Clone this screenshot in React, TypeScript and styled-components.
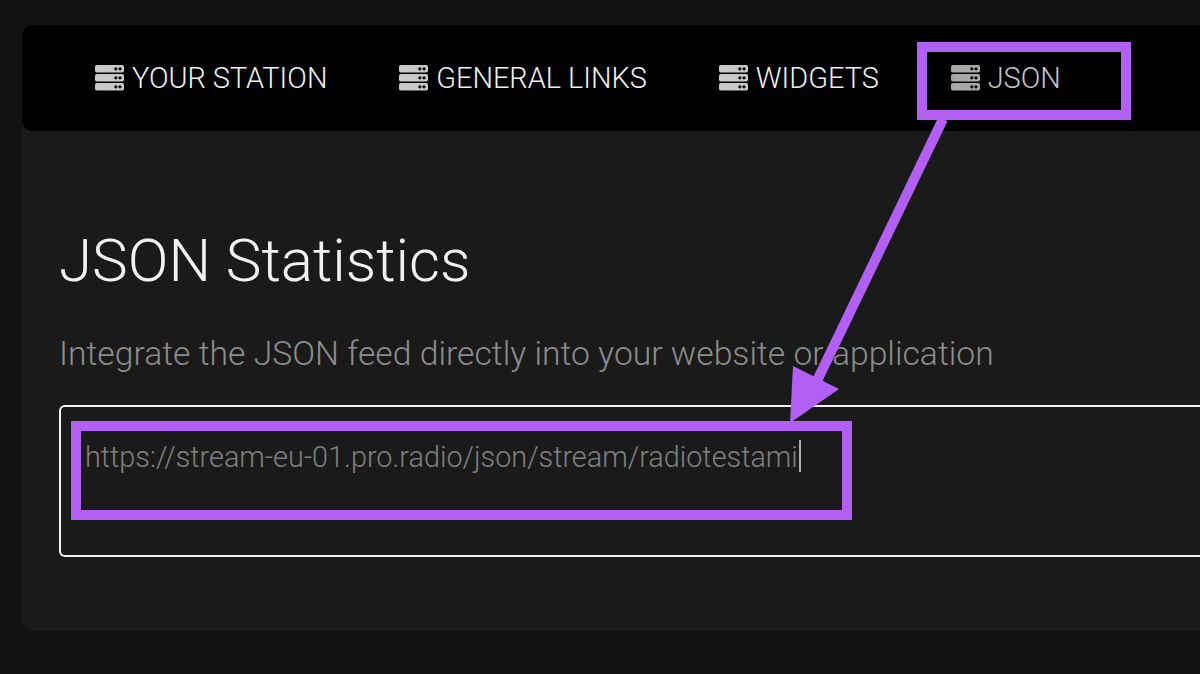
import styled, { createGlobalStyle } from "styled-components";

const navItems = [
  { label: "YOUR STATION" },
  { label: "GENERAL LINKS" },
  { label: "WIDGETS" },
  { label: "JSON", active: true },
];

function ServerIcon() {
  return (
    <svg width="29" height="26" viewBox="0 0 29 26" fill="currentColor">
      {[0, 9, 18].map((y) => (
        <g key={y}>
          <rect x="0" y={y} width="29" height="7.6" rx="1.8" />
          <circle cx="20.8" cy={y + 3.8} r="1.6" fill="#000" />
          <circle cx="25" cy={y + 3.8} r="1.6" fill="#000" />
        </g>
      ))}
    </svg>
  );
}

function App() {
  return (
    <>
      <GlobalStyle />
      <Page>
        <Card>
          <Nav>
            {navItems.map((item) => (
              <NavItem key={item.label} $active={item.active}>
                <ServerIcon />
                <span>{item.label}</span>
              </NavItem>
            ))}
          </Nav>
          <Body>
            <Title>JSON Statistics</Title>
            <Subtitle>Integrate the JSON feed directly into your website or application</Subtitle>
            <FeedBox>
              <FeedUrl>https://stream-eu-01.pro.radio/json/stream/radiotestami</FeedUrl>
              <Caret />
            </FeedBox>
          </Body>
        </Card>
        <HighlightNav />
        <HighlightField />
        <Arrow viewBox="0 0 1200 674">
          <line x1="943" y1="119" x2="815" y2="385" stroke="#b260f4" strokeWidth="10" />
          <polygon points="790,423 793,366 839,389" fill="#b260f4" />
        </Arrow>
      </Page>
    </>
  );
}

const GlobalStyle = createGlobalStyle`
  html, body {
    margin: 0;
    padding: 0;
    background: #121212;
  }
`;

const Page = styled.div`
  position: relative;
  width: 1200px;
  height: 674px;
  overflow: hidden;
  padding: 25px 0 0 22px;
  box-sizing: border-box;
  background: #121212;
  font-family: Roboto, "Liberation Sans", sans-serif;
`;

const Card = styled.div`
  width: 1240px;
  height: 606px;
  background: #1a1a1a;
  border-radius: 10px;
  overflow: hidden;
`;

const Nav = styled.nav`
  display: flex;
  align-items: center;
  gap: 71.8px;
  height: 106px;
  background: #000;
  border-radius: 10px;
  padding-left: 73px;
  box-sizing: border-box;
`;

const NavItem = styled.div<{ $active?: boolean }>`
  display: flex;
  align-items: center;
  gap: 8px;
  font-size: 28.9px;
  font-weight: 300;
  line-height: 34px;
  color: ${(p) => (p.$active ? "#c4c4c4" : "#f0f0f0")};
  svg {
    color: ${(p) => (p.$active ? "#a8a8a8" : "#c8c8c8")};
    flex: none;
  }
`;

const Body = styled.div`
  padding: 95px 0 0 37px;
`;

const Title = styled.h1`
  margin: 0;
  font-size: 60.1px;
  font-weight: 300;
  line-height: 70px;
  color: #f2f2f2;
`;

const Subtitle = styled.p`
  margin: 39px 0 0;
  font-size: 33.7px;
  font-weight: 300;
  line-height: 38px;
  color: #8c8c8c;
`;

const FeedBox = styled.div`
  display: flex;
  align-items: flex-start;
  margin-top: 32px;
  height: 152px;
  padding: 33px 0 0 24px;
  box-sizing: border-box;
  border: 2px solid #f2f2f2;
  border-right: none;
  border-radius: 6px 0 0 6px;
`;

const FeedUrl = styled.span`
  font-size: 28.8px;
  font-weight: 300;
  line-height: 34px;
  color: #808080;
`;

const Caret = styled.span`
  width: 2px;
  height: 32px;
  margin-left: 1px;
  background: #b0b0b0;
`;

const HighlightNav = styled.div`
  position: absolute;
  left: 917px;
  top: 42px;
  width: 214px;
  height: 78px;
  box-sizing: border-box;
  border: 10px solid #b260f4;
`;

const HighlightField = styled.div`
  position: absolute;
  left: 71px;
  top: 421px;
  width: 781px;
  height: 99px;
  box-sizing: border-box;
  border: 10px solid #b260f4;
`;

const Arrow = styled.svg`
  position: absolute;
  left: 0;
  top: 0;
  width: 1200px;
  height: 674px;
  pointer-events: none;
`;

export default App;
